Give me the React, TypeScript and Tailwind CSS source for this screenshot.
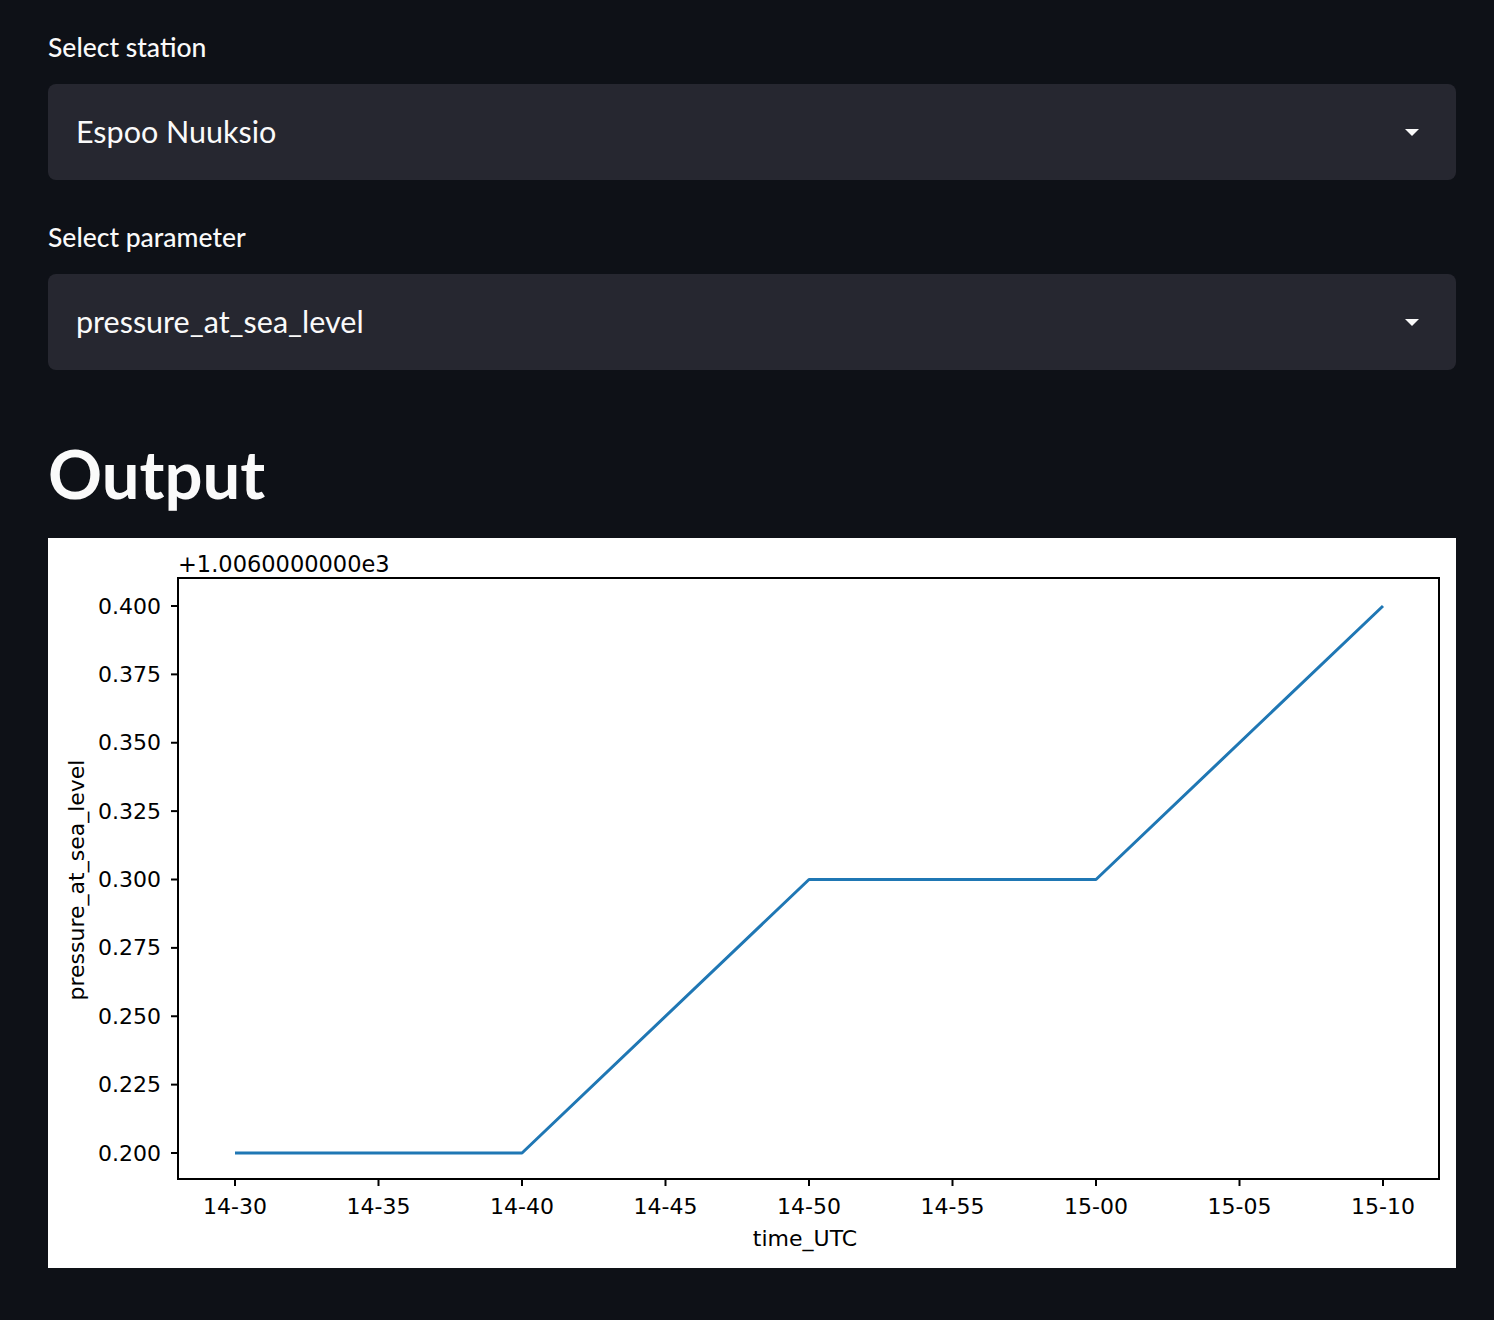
import React from 'react';

// Streamlit-ähnliches Dark-Theme: zwei Selectboxen + Matplotlib-Chart
const X_TICKS = ['14-30', '14-35', '14-40', '14-45', '14-50', '14-55', '15-00', '15-05', '15-10'];
const Y_TICKS = [0.4, 0.375, 0.35, 0.325, 0.3, 0.275, 0.25, 0.225, 0.2];

// Datenpunkte: (Tick-Index, Wert)
const DATA: [number, number][] = [
  [0, 0.2],
  [2, 0.2],
  [4, 0.3],
  [6, 0.3],
  [8, 0.4],
];

const AX = { left: 130, right: 1391, top: 40, bottom: 641 };
const xPos = (i: number) => 187 + i * 143.5;
const yPos = (v: number) => 68 + ((0.4 - v) / 0.025) * 68.375;

function Caret() {
  return (
    <svg width="16" height="9" viewBox="0 0 16 9" className="shrink-0">
      <path d="M1 1 L15 1 L8 8 Z" fill="#fafafa" />
    </svg>
  );
}

function SelectBox({ value }: { value: string }) {
  return (
    <div className="flex h-[96px] items-center justify-between rounded-[8px] bg-[#262730] pl-[28px] pr-[36px]">
      <span className="text-[30.5px] text-[#fafafa]">{value}</span>
      <Caret />
    </div>
  );
}

function Chart() {
  const points = DATA.map(([i, v]) => `${xPos(i)},${yPos(v)}`).join(' ');
  const font = "'DejaVu Sans', sans-serif";

  return (
    <div className="mt-[20px] h-[730px] w-full bg-white">
      <svg width="1408" height="730" viewBox="0 0 1408 730" fontFamily={font} fill="#000">
        {/* Offset-Text */}
        <text x={AX.left} y={34} fontSize="22.5">+1.0060000000e3</text>

        {/* Linie */}
        <polyline points={points} fill="none" stroke="#1f77b4" strokeWidth="3" strokeLinejoin="round" />

        {/* Achsenrahmen */}
        <rect
          x={AX.left}
          y={AX.top}
          width={AX.right - AX.left}
          height={AX.bottom - AX.top}
          fill="none"
          stroke="#000"
          strokeWidth="2"
        />

        {/* Y-Ticks */}
        {Y_TICKS.map((v) => (
          <g key={v}>
            <line x1={AX.left - 7} x2={AX.left} y1={yPos(v)} y2={yPos(v)} stroke="#000" strokeWidth="2" />
            <text x={AX.left - 17} y={yPos(v)} fontSize="22" textAnchor="end" dominantBaseline="central">
              {v.toFixed(3)}
            </text>
          </g>
        ))}

        {/* X-Ticks */}
        {X_TICKS.map((t, i) => (
          <g key={t}>
            <line x1={xPos(i)} x2={xPos(i)} y1={AX.bottom} y2={AX.bottom + 7} stroke="#000" strokeWidth="2" />
            <text x={xPos(i)} y={668} fontSize="22" textAnchor="middle" dominantBaseline="central">
              {t}
            </text>
          </g>
        ))}

        {/* Achsenbeschriftungen */}
        <text x={757} y={700} fontSize="22" textAnchor="middle" dominantBaseline="central">
          time_UTC
        </text>
        <text
          x={28}
          y={342}
          fontSize="22"
          textAnchor="middle"
          dominantBaseline="central"
          transform="rotate(-90 28 342)"
        >
          pressure_at_sea_level
        </text>
      </svg>
    </div>
  );
}

export default function App() {
  return (
    <div
      className="min-h-[1320px] w-full bg-[#0e1117] px-[48px] pt-[28px] text-[#fafafa]"
      style={{ fontFamily: "Lato, 'Noto Sans', sans-serif" }}
    >
      <div className="w-[1408px]">
        <p className="h-[38px] text-[26.5px] font-medium leading-[38px]">Select station</p>
        <div className="mt-[18px]">
          <SelectBox value="Espoo Nuuksio" />
        </div>

        <p className="mt-[38px] h-[38px] text-[26.5px] font-medium leading-[38px]">Select parameter</p>
        <div className="mt-[18px]">
          <SelectBox value="pressure_at_sea_level" />
        </div>

        <h2 className="mt-[58px] h-[90px] text-[67px] font-bold leading-[90px]">Output</h2>

        <Chart />
      </div>
    </div>
  );
}
